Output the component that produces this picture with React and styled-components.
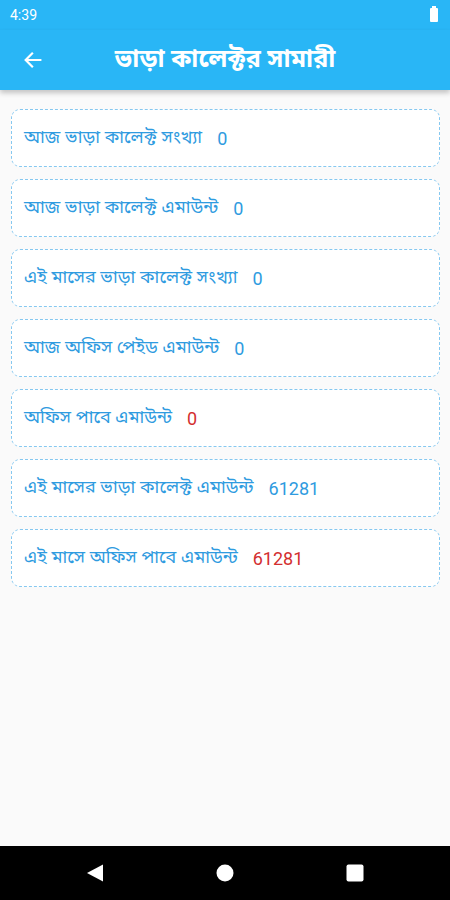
import React from 'react'
import styled, { createGlobalStyle } from 'styled-components'

const GlobalStyle = createGlobalStyle`
  html, body {
    margin: 0;
    padding: 0;
    background: #fafafa;
  }
  body {
    font-family: "Noto Sans Bengali", "Noto Sans", Roboto, sans-serif;
  }
`

const Screen = styled.div`
  width: 450px;
  height: 900px;
  display: flex;
  flex-direction: column;
  background: #fafafa;
  overflow: hidden;
`

const StatusBar = styled.div`
  height: 30px;
  background: #29b6f6;
  display: flex;
  align-items: center;
  justify-content: space-between;
  padding: 0 12px 0 10px;
  color: #fff;
  font-family: Roboto, sans-serif;
  font-size: 14px;
`

const Battery = styled.div`
  width: 8px;
  height: 14px;
  background: #fff;
  border-radius: 1px;
  position: relative;
  &::before {
    content: '';
    position: absolute;
    top: -2px;
    left: 2px;
    width: 4px;
    height: 2px;
    background: #fff;
  }
`

const AppBar = styled.div`
  height: 60px;
  background: #29b6f6;
  display: flex;
  align-items: center;
  padding: 0 22px;
  box-shadow: 0 3px 5px rgba(0, 0, 0, 0.22);
  position: relative;
  z-index: 1;
`

const BackButton = styled.div`
  width: 30px;
  display: flex;
  align-items: center;
`

const Title = styled.div`
  flex: 1;
  text-align: center;
  color: #fff;
  font-size: 25px;
  font-weight: 700;
  margin-right: 30px;
`

const List = styled.div`
  flex: 1;
  display: flex;
  flex-direction: column;
  gap: 12px;
  padding: 19px 10px 0 11px;
`

const Card = styled.div`
  height: 58px;
  box-sizing: border-box;
  border: 1px dashed #86c8f0;
  border-radius: 9px;
  background: #fff;
  display: flex;
  align-items: center;
  padding: 0 12px;
  font-size: 18px;
  color: #2f9be0;
`

const Value = styled.span`
  margin-left: 15px;
  font-family: Roboto, sans-serif;
  font-size: 18px;
  color: ${({ $red }) => ($red ? '#d32f2f' : '#2f9be0')};
`

const NavBar = styled.div`
  height: 54px;
  background: #000;
  display: flex;
  align-items: center;
  justify-content: center;
  gap: 112px;
`

const rows = [
  { label: 'আজ ভাড়া কালেক্ট সংখ্যা', value: '0' },
  { label: 'আজ ভাড়া কালেক্ট এমাউন্ট', value: '0' },
  { label: 'এই মাসের ভাড়া কালেক্ট সংখ্যা', value: '0' },
  { label: 'আজ অফিস পেইড এমাউন্ট', value: '0' },
  { label: 'অফিস পাবে এমাউন্ট', value: '0', red: true },
  { label: 'এই মাসের ভাড়া কালেক্ট এমাউন্ট', value: '61281' },
  { label: 'এই মাসে অফিস পাবে এমাউন্ট', value: '61281', red: true },
]

export default function App() {
  return (
    <Screen>
      <GlobalStyle />
      <StatusBar>
        <span>4:39</span>
        <Battery />
      </StatusBar>
      <AppBar>
        <BackButton>
          <svg width="22" height="22" viewBox="0 0 24 24" fill="none" stroke="#fff" strokeWidth="2.4" strokeLinecap="square">
            <path d="M20 12H5M11 5l-7 7 7 7" />
          </svg>
        </BackButton>
        <Title>ভাড়া কালেক্টর সামারী</Title>
      </AppBar>
      <List>
        {rows.map((r) => (
          <Card key={r.label}>
            {r.label}
            <Value $red={r.red}>{r.value}</Value>
          </Card>
        ))}
      </List>
      <NavBar>
        <svg width="18" height="18" viewBox="0 0 18 18">
          <path d="M17 0.5v17L1 9z" fill="#fff" />
        </svg>
        <svg width="18" height="18" viewBox="0 0 18 18">
          <circle cx="9" cy="9" r="8.5" fill="#fff" />
        </svg>
        <svg width="18" height="18" viewBox="0 0 18 18">
          <rect x="0.5" y="0.5" width="17" height="17" rx="2" fill="#fff" />
        </svg>
      </NavBar>
    </Screen>
  )
}
